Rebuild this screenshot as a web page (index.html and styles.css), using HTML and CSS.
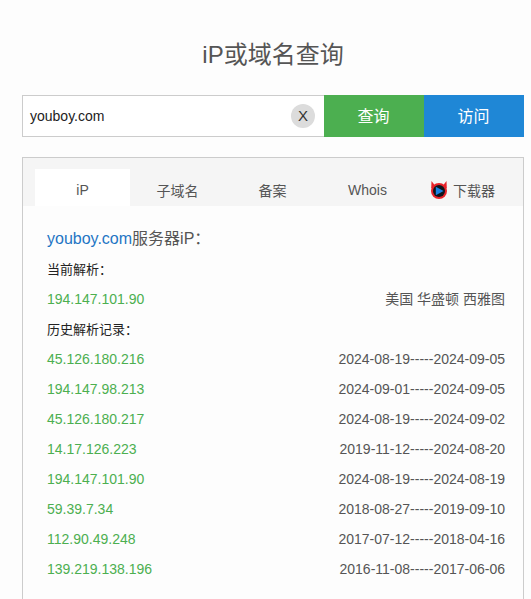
FILE: index.html
```
<!DOCTYPE html>
<html lang="zh">
<head>
<meta charset="utf-8">
<title>iP或域名查询</title>
<link rel="stylesheet" href="styles.css">
</head>
<body>
<main class="page">
  <h1 class="title">iP或域名查询</h1>
  <form class="search">
    <div class="field">
      <span class="query">youboy.com</span>
      <span class="clear">X</span>
    </div>
    <span class="btn btn-green">查询</span>
    <span class="btn btn-blue">访问</span>
  </form>
  <section class="card">
    <nav class="tabs">
      <span class="tab active">iP</span>
      <span class="tab">子域名</span>
      <span class="tab">备案</span>
      <span class="tab">Whois</span>
      <span class="tab tab-dl">
        <svg class="dl-icon" width="18" height="20" viewBox="0 0 18 20">
          <path d="M1.5 1 L5 5.5 H13 L16.5 1 L16.8 8 H1.2 Z" fill="#e8232a"/>
          <circle cx="9" cy="11" r="8" fill="#e8232a"/>
          <circle cx="9" cy="11" r="6" fill="#10151c"/>
          <path d="M5.8 6.8 L13.6 11 L5.8 15.2 Z" fill="#1a82e2"/>
        </svg>
        下载器
      </span>
    </nav>
    <div class="body">
      <h2 class="heading"><span class="domain">youboy.com</span>服务器iP：</h2>
      <div class="label">当前解析：</div>
      <div class="row"><span class="ip">194.147.101.90</span><span>美国 华盛顿 西雅图</span></div>
      <div class="label">历史解析记录：</div>
      <div class="row"><span class="ip">45.126.180.216</span><span>2024-08-19-----2024-09-05</span></div>
      <div class="row"><span class="ip">194.147.98.213</span><span>2024-09-01-----2024-09-05</span></div>
      <div class="row"><span class="ip">45.126.180.217</span><span>2024-08-19-----2024-09-02</span></div>
      <div class="row"><span class="ip">14.17.126.223</span><span>2019-11-12-----2024-08-20</span></div>
      <div class="row"><span class="ip">194.147.101.90</span><span>2024-08-19-----2024-08-19</span></div>
      <div class="row"><span class="ip">59.39.7.34</span><span>2018-08-27-----2019-09-10</span></div>
      <div class="row"><span class="ip">112.90.49.248</span><span>2017-07-12-----2018-04-16</span></div>
      <div class="row"><span class="ip">139.219.138.196</span><span>2016-11-08-----2017-06-06</span></div>
    </div>
  </section>
</main>
</body>
</html>
```
FILE: styles.css
```
* { box-sizing: border-box; }
html, body { margin: 0; height: 100%; overflow: hidden; }
body {
  background: #fdfdfd;
  color: #555;
  font-family: "Liberation Sans", "Noto Sans CJK SC", sans-serif;
  font-size: 14px;
}
.page { width: 502px; margin-left: 22px; padding-top: 37px; }
.title {
  margin: 0 0 23px;
  font-size: 24px;
  font-weight: 400;
  line-height: 35px;
  text-align: center;
  color: #555;
}
.search { display: flex; height: 42px; }
.field {
  flex: 0 0 302px;
  display: flex;
  align-items: center;
  justify-content: space-between;
  padding: 0 9px 0 7px;
  background: #fff;
  border: 1px solid #ccc;
  border-right: 0;
}
.query { color: #222; font-size: 14px; }
.clear {
  width: 24px;
  height: 24px;
  border-radius: 50%;
  background: #dcdcdc;
  color: #333;
  text-align: center;
  line-height: 24px;
  font-size: 15px;
}
.btn {
  flex: 0 0 100px;
  display: flex;
  align-items: center;
  justify-content: center;
  padding: 0 1px 2px 0;
  color: #fff;
  font-size: 16px;
}
.btn-green { background: #4caf50; }
.btn-blue { background: #1f87d6; }
.card {
  margin-top: 20px;
  height: 460px;
  border: 1px solid #ccc;
  background: #fdfdfd;
}
.tabs {
  display: flex;
  padding: 11px 0 0 12px;
  height: 48px;
  background: #f5f5f5;
}
.tab {
  flex: 0 0 95px;
  display: flex;
  align-items: center;
  justify-content: center;
  gap: 5px;
  height: 37px;
  padding-top: 4px;
  color: #555;
}
.tab.active { background: #fff; }
.dl-icon { flex: none; }
.body { padding: 21px 18px 0 24px; }
.heading {
  margin: 0 0 3px;
  font-size: 16px;
  font-weight: 400;
  line-height: 24px;
  color: #555;
}
.domain { color: #1f75c4; }
.label { padding-top: 2px; line-height: 28px; color: #222; font-size: 13px; }
.row {
  display: flex;
  justify-content: space-between;
  line-height: 30px;
  color: #555;
}
.ip { color: #4caf50; }
```
